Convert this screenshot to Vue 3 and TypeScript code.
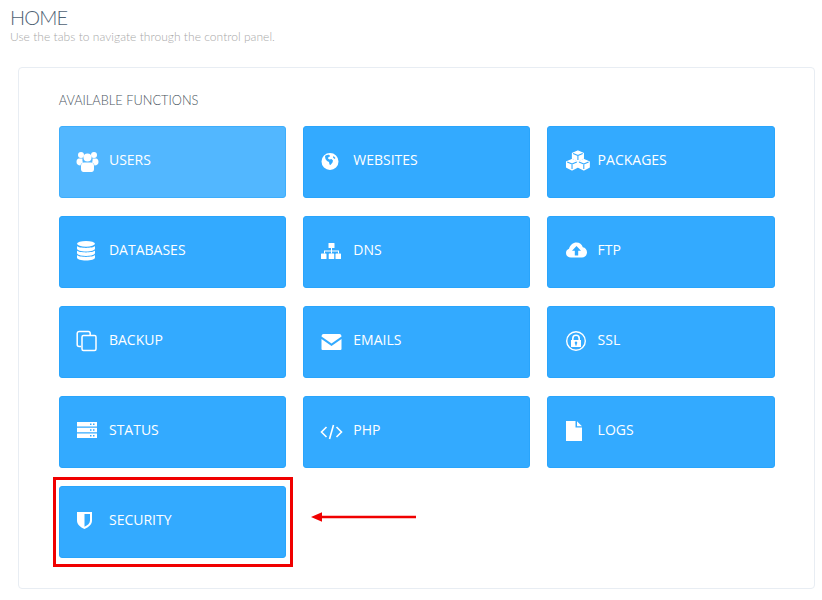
<script setup lang="ts">
interface Tile { label: string; icon: string; hover?: boolean }
const tiles: Tile[] = [
  { label: 'Users', icon: 'users', hover: true },
  { label: 'Websites', icon: 'globe' },
  { label: 'Packages', icon: 'cubes' },
  { label: 'Databases', icon: 'db' },
  { label: 'DNS', icon: 'sitemap' },
  { label: 'FTP', icon: 'cloud' },
  { label: 'Backup', icon: 'copy' },
  { label: 'Emails', icon: 'mail' },
  { label: 'SSL', icon: 'lock' },
  { label: 'Status', icon: 'server' },
  { label: 'PHP', icon: 'code' },
  { label: 'Logs', icon: 'file' },
  { label: 'Security', icon: 'shield' }
]
</script>

<template>
  <main class="page">
    <h1 class="title">HOME</h1>
    <p class="sub">Use the tabs to navigate through the control panel.</p>
    <section class="panel">
      <h2 class="heading">AVAILABLE FUNCTIONS</h2>
      <div class="grid">
        <a v-for="t in tiles" :key="t.label" class="tile" :class="{ hover: t.hover }">
          <svg class="icon" viewBox="0 0 24 24" fill="#fff">
            <g v-if="t.icon === 'users'">
              <circle cx="5" cy="7" r="3" /><circle cx="18" cy="7" r="3" />
              <circle cx="11.500" cy="9.500" r="4" />
              <path d="M.5 14c0-2 1-3.500 2.500-3.500h3.500C6.300 12.500 6.500 13.500 7 14.500 5.500 15 4.800 16 4.500 17.500 2 17.500.5 16 .5 14zM22.500 14c0-2-1-3.500-2.500-3.500h-3.500c.2 2 0 3-.5 4 1.500.5 2.200 1.500 2.500 3 2.500 0 4-1.500 4-3.500z" />
              <path d="M8 14.500h7c2 0 3 1.500 3 3.500v3c0 1.800-1 3-2.500 3h-8C6 24 5 22.800 5 21v-3c0-2 1-3.500 3-3.500z" />
            </g>
            <path v-else-if="t.icon === 'globe'" transform="translate(-4.500 0)" fill-rule="evenodd" d="M14.500 5a8.500 8.500 0 1 0 0 17 8.500 8.500 0 0 0 0-17zM10 7.500c1.500-.8 3-1 4-.5l.5 1.500-1.500.5-.5 1.500 1.500 1 2-.5 1.500 1.500-.5 2-2 2.500-1-.5-.5-2.500-2-1-1.500-2-.5-2.500zM18 8l2 2-1 1-1.500-1.500z" />
            <g v-else-if="t.icon === 'cubes'" transform="translate(-1 0) scale(1.070 1)" stroke="#fff" stroke-width="1.300" stroke-linejoin="round">
              <path d="M13 3l5 2.300v5.200l-5 2.300-5-2.300V5.300z" />
              <path d="M7.500 11.500l5 2.300v5.400l-5 2.600-5-2.600v-5.400z" />
              <path d="M18.500 11.500l5 2.300v5.400l-5 2.600-5-2.600v-5.400z" />
              <path d="M8.500 5.500L13 7.500l4.500-2M3 14l4.500 2 4.500-2M14 14l4.500 2 4.500-2" fill="none" stroke="#33aaff" stroke-width="1" />
              <path d="M7.500 16.500V21M18.500 16.500V21M13 8v4" fill="none" stroke="#33aaff" stroke-width="1" />
            </g>
            <g v-else-if="t.icon === 'db'">
              <ellipse cx="10" cy="5.800" rx="9" ry="2.900" />
              <path d="M1 8c2 2.500 16 2.500 18 0v2.500c0 1.800-4 3-9 3s-9-1.200-9-3z" />
              <path d="M1 12.500c2 2.500 16 2.500 18 0V15c0 1.800-4 3-9 3s-9-1.200-9-3z" />
              <path d="M1 17c2 2.500 16 2.500 18 0v2.500c0 1.800-4 3-9 3s-9-1.200-9-3z" />
            </g>
            <g v-else-if="t.icon === 'sitemap'" transform="translate(0 2)">
              <rect x="8.500" y="3" width="6" height="5" rx=".6" />
              <rect x="1" y="13.500" width="5.500" height="5.500" rx=".6" />
              <rect x="8.700" y="13.500" width="5.500" height="5.500" rx=".6" />
              <rect x="15.500" y="13.500" width="5.500" height="5.500" rx=".6" />
              <path d="M11 8h1v2.500h7v3h-1V11.500h-6v2h-1v-2H5v2H4v-3h7z" />
            </g>
            <path v-else-if="t.icon === 'cloud'" transform="translate(0 1.500)" fill-rule="evenodd" d="M6 18c-3 0-5-2-5-4.500 0-2 1.200-3.500 3-4.200C5 5.500 8 3 11.500 3c3 0 5.500 2 6.300 4.800 2.500.3 4.200 2.500 4.200 5 0 3-2.200 5.200-5 5.200zM11.500 6.500L7 11.200h2.800V16h3.400v-4.800H16z" />
            <g v-else-if="t.icon === 'copy'" fill="none" stroke="#fff" stroke-width="1.500">
              <path d="M5 18.500H3.200a2 2 0 0 1-2-2V5.500a2 2 0 0 1 2-2h9a2 2 0 0 1 2 2V7" />
              <rect x="6" y="7.500" width="14" height="15" rx="1.500" />
            </g>
            <g v-else-if="t.icon === 'mail'" transform="translate(.5 2)">
              <path d="M1 6.500C1 5.700 1.500 4 3 4h16c1.500 0 2 1.700 2 2.500l-10 7z" />
              <path d="M1 9l10 7 10-7v10c0 .8-.7 1-1.500 1h-17C1.700 20 1 19.800 1 19z" />
            </g>
            <g v-else-if="t.icon === 'lock'" transform="translate(.5 2)">
              <path fill-rule="evenodd" d="M10.500 1a10 10 0 1 0 0 20 10 10 0 0 0 0-20zm0 1.400a8.600 8.600 0 1 1 0 17.200 8.600 8.600 0 0 1 0-17.200z" />
              <path fill-rule="evenodd" d="M6.500 10V8.500a4 4 0 0 1 8 0V10h1v7h-10v-7zm1.600 0h4.800V8.500a2.400 2.400 0 0 0-4.800 0zM10.500 11.500a1.300 1.300 0 0 0-.7 2.400v1.600h1.400v-1.600a1.300 1.300 0 0 0-.7-2.400z" />
            </g>
            <g v-else-if="t.icon === 'server'">
              <path fill-rule="evenodd" d="M1 4h20v4.500H1zm13 1.500v1.500h1.500V5.500zm3 0v1.500h1.500V5.500zM1 9.800h20v4.400H1zm13 1.500v1.500h1.500v-1.500zm3 0v1.500h1.500v-1.500zM1 15.500h20V20H1zm13 1.500v1.500h1.500V17zm3 0v1.500h1.500V17z" />
            </g>
            <g v-else-if="t.icon === 'code'" transform="translate(0 2)" fill="none" stroke="#fff" stroke-width="1.600">
              <path d="M6.500 7L1.500 12l5 5M16.500 7l5 5-5 5" />
              <path d="M13.500 5l-4 14" />
            </g>
            <path v-else-if="t.icon === 'file'" transform="translate(0 2)" d="M1 1h9.500v6.500H17V21H1zM12 1.200l5 5h-5z" />
            <path v-else transform="translate(0 1.500)" fill-rule="evenodd" d="M1 2.500h15v8.500c0 4-3.300 6.500-7.500 8.500C4.300 17.500 1 15 1 11zM8.500 4.500v12.800c3-1.500 5.500-3.500 5.500-6.300V4.500z" />
          </svg>
          <span class="label">{{ t.label }}</span>
        </a>
      </div>
      <div class="callout" aria-hidden="true"></div>
      <svg class="arrow" width="106" height="12" viewBox="0 0 106 12" aria-hidden="true">
        <path d="M10 4.800h95v2.400H10z" fill="#f00000" />
        <path d="M0 6L11 1.200v9.600z" fill="#f00000" />
      </svg>
    </section>
  </main>
</template>

<style>
html, body { background: #fff; }
</style>

<style scoped>
.page {
  width: 822px;
  height: 600px;
  box-sizing: border-box;
  padding: 5px 7px 0 18px;
  overflow: hidden;
  font-family: "Lato", "Liberation Sans", sans-serif;
}
.title {
  margin: 0 0 1px -8px;
  font-size: 20px;
  line-height: 24px;
  font-weight: 300;
  letter-spacing: -0.9px;
  color: #4f6274;
}
.sub {
  margin: 0 0 23px -8px;
  font-size: 12px;
  line-height: 14px;
  font-weight: 300;
  letter-spacing: 0.04px;
  color: #a8a8a8;
}
.panel {
  position: relative;
  box-sizing: border-box;
  width: 797px;
  height: 522px;
  padding: 25px 40px 0 39.67px;
  border: 1px solid #e8edf3;
  border-radius: 4px;
  background: #fff;
}
.heading {
  margin: 0 0 18px;
  font-size: 12.8px;
  line-height: 15px;
  font-weight: 300;
  color: #4a5560;
}
.grid {
  display: grid;
  grid-template-columns: repeat(3, 227.33px);
  grid-auto-rows: 72px;
  column-gap: 17px;
  row-gap: 18px;
}
.tile {
  display: flex;
  align-items: center;
  box-sizing: border-box;
  padding: 0 0 6px 16.3px;
  background: #33aaff;
  border: 1px solid #29a5fc;
  border-radius: 3px;
  color: #fff;
  font-family: "Open Sans", "Liberation Sans", sans-serif;
  font-size: 14px;
  text-transform: uppercase;
}
.tile.hover { background: #52b7ff; border-color: #3eaefc; }
.icon {
  flex: none;
  width: 24px;
  height: 24px;
  margin: 2px 9px 0 0;
  overflow: visible;
}
.callout {
  position: absolute;
  left: 34px;
  top: 409px;
  width: 240px;
  height: 90px;
  box-sizing: border-box;
  border: 3px solid #f00000;
}
.arrow {
  position: absolute;
  left: 292px;
  top: 443px;
}
</style>
